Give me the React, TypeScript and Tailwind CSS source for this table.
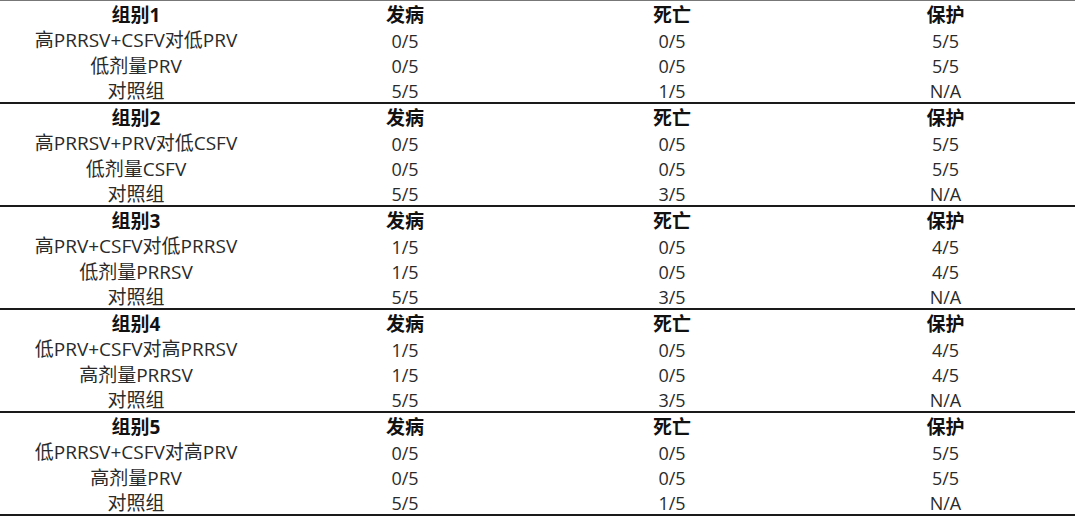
import React from "react";

type Group = {
  title: string;
  rows: [string, string, string, string][];
};

const groups: Group[] = [
  {
    title: "组别1",
    rows: [
      ["高PRRSV+CSFV对低PRV", "0/5", "0/5", "5/5"],
      ["低剂量PRV", "0/5", "0/5", "5/5"],
      ["对照组", "5/5", "1/5", "N/A"],
    ],
  },
  {
    title: "组别2",
    rows: [
      ["高PRRSV+PRV对低CSFV", "0/5", "0/5", "5/5"],
      ["低剂量CSFV", "0/5", "0/5", "5/5"],
      ["对照组", "5/5", "3/5", "N/A"],
    ],
  },
  {
    title: "组别3",
    rows: [
      ["高PRV+CSFV对低PRRSV", "1/5", "0/5", "4/5"],
      ["低剂量PRRSV", "1/5", "0/5", "4/5"],
      ["对照组", "5/5", "3/5", "N/A"],
    ],
  },
  {
    title: "组别4",
    rows: [
      ["低PRV+CSFV对高PRRSV", "1/5", "0/5", "4/5"],
      ["高剂量PRRSV", "1/5", "0/5", "4/5"],
      ["对照组", "5/5", "3/5", "N/A"],
    ],
  },
  {
    title: "组别5",
    rows: [
      ["低PRRSV+CSFV对高PRV", "0/5", "0/5", "5/5"],
      ["高剂量PRV", "0/5", "0/5", "5/5"],
      ["对照组", "5/5", "1/5", "N/A"],
    ],
  },
];

const cell = "flex items-center justify-center pt-[4px] leading-none whitespace-nowrap";

export default function App() {
  return (
    <div
      className="w-[1080px] h-[517px] bg-white overflow-hidden text-[18px] text-[#2a2a2a]"
      style={{ fontFamily: '"Open Sans", "Noto Sans CJK SC", sans-serif' }}
    >
      <div className="w-[1075px] border-t border-[#777]">
        {groups.map((g) => (
          <div
            key={g.title}
            className="grid grid-cols-[272px_266px_268px_1fr] grid-rows-[repeat(4,25.25px)] border-b-2 border-[#1a1a1a]"
          >
            <div className={`${cell} text-[19px] font-bold text-[#111]`}>{g.title}</div>
            <div className={`${cell} text-[19px] font-bold text-[#111]`}>发病</div>
            <div className={`${cell} text-[19px] font-bold text-[#111]`}>死亡</div>
            <div className={`${cell} pl-[10px] text-[19px] font-bold text-[#111]`}>保护</div>
            {g.rows.map((r, i) => (
              <React.Fragment key={i}>
                <div className={`${cell} text-[19px]`}>{r[0]}</div>
                <div className={cell}>{r[1]}</div>
                <div className={cell}>{r[2]}</div>
                <div className={`${cell} pl-[10px]`}>{r[3]}</div>
              </React.Fragment>
            ))}
          </div>
        ))}
      </div>
    </div>
  );
}
